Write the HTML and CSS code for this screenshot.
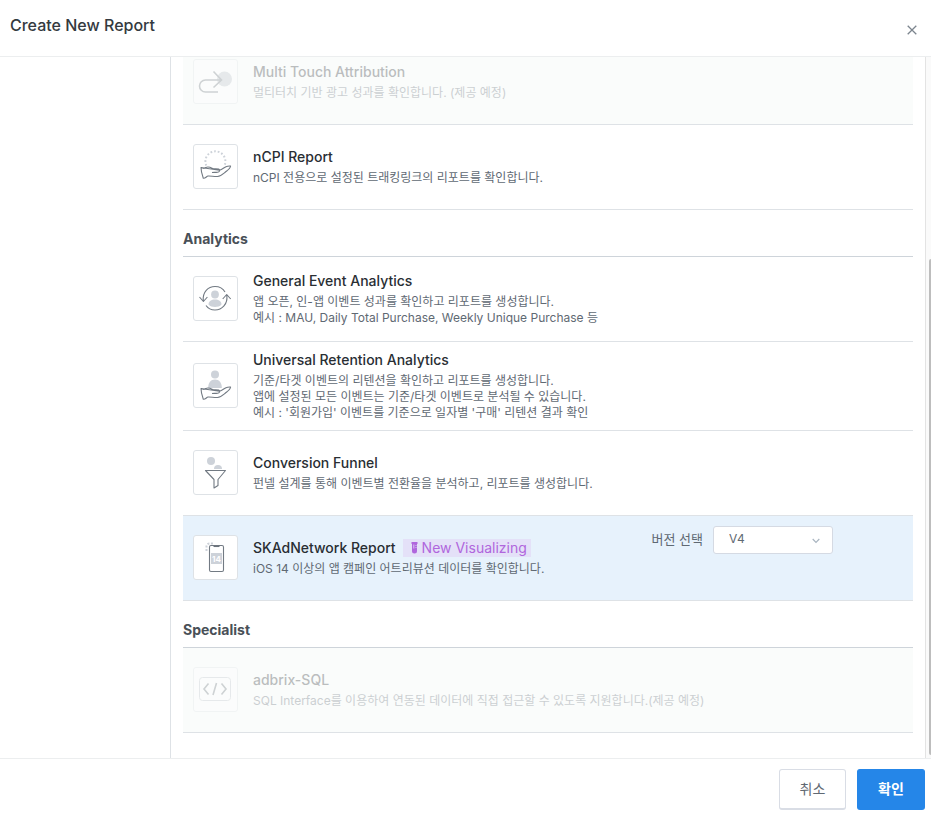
FILE: index.html
```html
<!DOCTYPE html>
<html lang="ko">
<head>
<meta charset="utf-8">
<meta name="viewport" content="width=device-width, initial-scale=1">
<title>Create New Report</title>
<link rel="stylesheet" href="styles.css">
</head>
<body>
<div class="modal" role="dialog" aria-labelledby="modal-title">
  <header class="modal-header">
    <h1 class="modal-title" id="modal-title">Create New Report</h1>
    <button class="close" type="button" aria-label="Close">
      <svg width="10" height="10" viewBox="0 0 10 10" fill="none" stroke="#7c858e" stroke-width="1.3"><path d="M.7.7l8.6 8.6M9.3.7L.7 9.3"/></svg>
    </button>
  </header>

  <div class="modal-body">
    <aside class="sidebar"></aside>
    <main class="content">
      <ul class="list">
        <li class="row disabled">
          <span class="thumb">
            <svg width="43" height="43" viewBox="0 0 43 43" fill="none"><circle cx="30.500" cy="19" r="7.500" fill="#b9c0c9"/><path d="M24 32H11.500a6 6 0 0 1 0-12H27M19.500 11.500L27.500 20l-8 7.500" stroke="#6b737c" stroke-width="1.600"/></svg>
          </span>
          <div class="info">
            <h3 class="name">Multi Touch Attribution</h3>
            <p class="desc">멀티터치 기반 광고 성과를 확인합니다. (제공 예정)</p>
          </div>
        </li>
        <li class="row">
          <span class="thumb">
            <svg width="43" height="43" viewBox="0 0 43 43" fill="none"><path d="M12.300 20.500a10 10 0 1 1 18.400-.5" stroke="#cdd2d9" stroke-width="2" stroke-dasharray="1.700 2"/><path class="hand" d="M7 22.500l3 .9c2.500-1.900 5.500-1.600 8-.2 2 1.100 4.500.3 6.700.9 1.800.8 1 2.900-1.200 3.100-2 .3-3.500.1-5.500.3M25.500 25.300c2.500-.8 4.500-2.600 6.500-3.600 1.800-.9 3.500-.7 4.600-.7-.3 2.500-2.600 4-4.900 5.800-2.400 1.900-4.700 4.400-8.200 4.700-3.500.2-6.500-.7-9.500-.5-1.500.2-2.300 2.500-4.700 2.300C8.300 30.500 7 26.500 7 22.500z"/></svg>
          </span>
          <div class="info">
            <h3 class="name">nCPI Report</h3>
            <p class="desc">nCPI 전용으로 설정된 트래킹링크의 리포트를 확인합니다.</p>
          </div>
        </li>
      </ul>

      <h2 class="section">Analytics</h2>
      <ul class="list">
        <li class="row">
          <span class="thumb">
            <svg width="43" height="43" viewBox="0 0 43 43" fill="none"><circle cx="21" cy="17.500" r="3.900" fill="#cdd2d9"/><path d="M14.500 27.500c0-3.500 3-5 6.500-5s6.500 1.500 6.500 5c-1.500 1.800-4 2.500-6.500 2.500s-5-.7-6.500-2.500z" fill="#cdd2d9"/><path class="line" d="M9.300 23.500C8.500 15 14 9.500 21 9.500c4.500 0 8 2 10 5.500M5.500 20l3.900 4.500 4-4.500M32.800 18.500C34 27 28 33 21 33c-4 0-7-1.500-9-4.500M28.700 22l4-4.500 4 4.500"/></svg>
          </span>
          <div class="info">
            <h3 class="name">General Event Analytics</h3>
            <p class="desc">앱 오픈, 인-앱 이벤트 성과를 확인하고 리포트를 생성합니다.<br>예시 : MAU, Daily Total Purchase, Weekly Unique Purchase 등</p>
          </div>
        </li>
        <li class="row">
          <span class="thumb">
            <svg width="43" height="43" viewBox="0 0 43 43" fill="none"><circle cx="21" cy="10.500" r="4" fill="#cdd2d9"/><path d="M14.200 24c0-5.500 2.500-8.500 6.800-8.500s6.800 3 6.800 8.500z" fill="#cdd2d9"/><path class="hand" d="M7 24.500l3 .9c2.500-1.900 5.500-1.600 8-.2 2 1.100 4.500.3 6.700.9 1.800.8 1 2.900-1.200 3.100-2 .3-3.500.1-5.500.3M25.500 27.300c2.500-.8 4.500-2.600 6.500-3.600 1.800-.9 3.500-.7 4.600-.7-.3 2.500-2.600 4-4.900 5.800-2.400 1.900-4.700 4.400-8.200 4.700-3.500.2-6.500-.7-9.500-.5-1.500.2-2.300 2.500-4.700 2.300C8.300 32.500 7 28.500 7 24.500z"/></svg>
          </span>
          <div class="info">
            <h3 class="name">Universal Retention Analytics</h3>
            <p class="desc">기준/타겟 이벤트의 리텐션을 확인하고 리포트를 생성합니다.<br>앱에 설정된 모든 이벤트는 기준/타겟 이벤트로 분석될 수 있습니다.<br>예시 : '회원가입' 이벤트를 기준으로 일자별 '구매' 리텐션 결과 확인</p>
          </div>
        </li>
        <li class="row">
          <span class="thumb">
            <svg width="43" height="43" viewBox="0 0 43 43" fill="none"><circle cx="17" cy="10" r="4" fill="#cdd2d9"/><path d="M20 18a4 4 0 0 1 8 0z" fill="#cdd2d9"/><path class="line" d="M11.500 19.500h20L24 28.500v6L20 37v-8.500z"/></svg>
          </span>
          <div class="info">
            <h3 class="name">Conversion Funnel</h3>
            <p class="desc">펀넬 설계를 통해 이벤트별 전환율을 분석하고, 리포트를 생성합니다.</p>
          </div>
        </li>
        <li class="row selected">
          <span class="thumb">
            <svg width="43" height="43" viewBox="0 0 43 43" fill="none"><path d="M12.500 15v-4a3 3 0 0 1 3-3.500H20" stroke="#cdd2d9" stroke-width="2" stroke-dasharray="2 1.500"/><rect class="line" x="15.500" y="9.500" width="14" height="26" rx="1.500"/><path d="M19.500 10.300h6" stroke="#6b737c" stroke-width="1.500"/><rect x="17" y="17" width="11" height="11" fill="#cdd2d9"/><text class="badge-number" x="22.500" y="25.500" text-anchor="middle">14</text></svg>
          </span>
          <div class="info">
            <h3 class="name">SKAdNetwork Report
              <span class="tag"><svg width="7" height="12" viewBox="0 0 7 12"><path d="M.5 0h6v2H6v7a2.500 2.500 0 0 1-5 0V2H.500z" fill="#b066dd"/><path d="M2.800 2.500v4M4.500 3.500h1M4.500 5.500h1" stroke="#e4e1f8" stroke-width=".8"/></svg>New Visualizing</span>
            </h3>
            <p class="desc">iOS 14 이상의 앱 캠페인 어트리뷰션 데이터를 확인합니다.</p>
          </div>
          <div class="version">
            <label for="version">버전 선택</label>
            <span class="select-wrap">
              <select id="version"><option>V4</option></select>
              <svg class="chevron" width="8" height="6" viewBox="0 0 8 6" fill="none" stroke="#a9b5c0" stroke-width="1.200"><path d="M.7 1L4 4.300 7.300 1"/></svg>
            </span>
          </div>
        </li>
      </ul>

      <h2 class="section">Specialist</h2>
      <ul class="list">
        <li class="row disabled">
          <span class="thumb">
            <svg width="43" height="43" viewBox="0 0 43 43" fill="none"><rect x="5.500" y="9.500" width="31" height="23" rx="3" stroke="#b9c0c9"/><path d="M14.500 15.500L10 21l4.500 5.500M27.500 15.500L32 21l-4.500 5.500M22.500 15l-3.500 12" stroke="#6b737c" stroke-width="1.600"/></svg>
          </span>
          <div class="info">
            <h3 class="name">adbrix-SQL</h3>
            <p class="desc">SQL Interface를 이용하여 연동된 데이터에 직접 접근할 수 있도록 지원합니다.(제공 예정)</p>
          </div>
        </li>
      </ul>
    </main>
    <div class="track"><div class="track-thumb"></div></div>
  </div>

  <footer class="modal-footer">
    <button class="btn" type="button">취소</button>
    <button class="btn primary" type="button">확인</button>
  </footer>
</div>
</body>
</html>
```
FILE: styles.css
```css
* {
  box-sizing: border-box;
}

body,
h1,
h2,
h3,
p,
ul {
  margin: 0;
  padding: 0;
}

body,
button,
select {
  font-family: Inter, "Noto Sans CJK KR", sans-serif;
}

body {
  background: #fff;
  color: #5f6973;
}

.modal {
  display: flex;
  flex-direction: column;
  height: 100vh;
}

.modal-header {
  display: flex;
  justify-content: space-between;
  height: 57px;
  padding: 13px 11px 0 10px;
  border-bottom: 1px solid #eceeef;
}

.modal-title {
  font-size: 16px;
  font-weight: 500;
  line-height: 24px;
  color: #343a40;
}

.close {
  display: grid;
  place-items: center;
  align-self: flex-start;
  width: 16px;
  height: 34px;
  padding: 0;
  border: 0;
  background: none;
}

.modal-body {
  display: flex;
  flex: 1;
  min-height: 0;
  overflow: hidden;
}

.sidebar {
  flex: 0 0 171px;
  border-right: 1px solid #dee2e6;
}

.content {
  display: flex;
  flex: 1;
  flex-direction: column;
  justify-content: flex-end;
  min-width: 0;
  padding: 0 12px 25px;
}

.list {
  list-style: none;
}

.section {
  height: 47px;
  padding-top: 19px;
  border-bottom: 1px solid #ced4da;
  font-size: 14px;
  font-weight: 700;
  line-height: 20px;
  color: #495057;
}

.list,
.section {
  flex-shrink: 0;
}

.row {
  display: flex;
  align-items: center;
  min-height: 85px;
  padding: 8px 10px 9px;
  border-bottom: 1px solid #dee2e6;
}

.row.selected {
  background: #e7f2fc;
}

.row.disabled {
  background: #fafcfb;
}

.disabled .thumb,
.disabled .info {
  opacity: 0.3;
}

.thumb {
  flex: none;
  width: 45px;
  height: 45px;
  margin-right: 15px;
  border: 1px solid #dee2e6;
  border-radius: 3px;
  background: #fff;
}

.thumb svg {
  display: block;
}

.line,
.hand {
  stroke: #727a83;
  stroke-width: 1.1;
  stroke-linejoin: round;
}

.badge-number {
  font-size: 8px;
  font-weight: 700;
  fill: #fff;
}

.info {
  flex: 1;
  min-width: 0;
}

.name {
  display: flex;
  align-items: center;
  margin-bottom: 3px;
  font-size: 14px;
  font-weight: 500;
  line-height: 20px;
  color: #292e33;
}

.desc {
  font-size: 12px;
  line-height: 16px;
}

.tag {
  display: flex;
  align-items: center;
  gap: 4px;
  height: 18px;
  margin-left: 7px;
  padding: 0 4px 0 8px;
  background: #e4e1f8;
  font-weight: 400;
  color: #b066dd;
}

.version {
  display: flex;
  align-items: flex-start;
  align-self: flex-start;
  gap: 10px;
  margin: 2px 70px 0 0;
  font-size: 13px;
  line-height: 26px;
}

.select-wrap {
  position: relative;
}

.select-wrap select {
  display: block;
  width: 120px;
  height: 28px;
  padding: 0 15px 3px;
  border: 1px solid #d5dae3;
  border-radius: 3px;
  appearance: none;
  background: #fff;
  font-size: 12px;
  color: #5f6973;
}

.chevron {
  position: absolute;
  top: 12px;
  right: 13px;
  pointer-events: none;
}

.track {
  display: flex;
  flex-direction: column;
  align-items: flex-end;
  justify-content: flex-end;
  width: 6px;
  padding-bottom: 3px;
  border-left: 1px solid #e3e3e3;
  background: #fafafa;
}

.track-thumb {
  width: 2px;
  height: 71%;
  border-radius: 2px 0 0 2px;
  background: #bdbdbd;
}

.modal-footer {
  display: flex;
  justify-content: flex-end;
  gap: 11px;
  height: 57px;
  padding: 10px 6px 6px;
  border-top: 1px solid #eceeef;
}

.btn {
  width: 67px;
  height: 41px;
  padding: 0 0 2px;
  border: 1px solid #d9dde5;
  border-bottom-width: 2px;
  border-radius: 3px;
  background: #fff;
  font-size: 14px;
  color: #5f6973;
}

.btn.primary {
  width: 68px;
  border-color: #2586e8;
  background: #2586e8;
  font-weight: 600;
  color: #fff;
}
```
